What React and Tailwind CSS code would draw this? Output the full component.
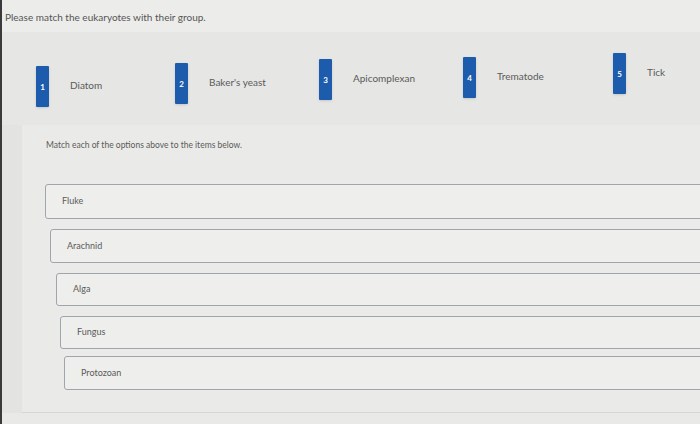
import React from 'react';

const options = [
  { n: 1, label: 'Diatom', w: 'w-[139px]', mt: 'mt-[34px]' },
  { n: 2, label: "Baker's yeast", w: 'w-[144px]', mt: 'mt-[31px]' },
  { n: 3, label: 'Apicomplexan', w: 'w-[144px]', mt: 'mt-[27px]' },
  { n: 4, label: 'Trematode', w: 'w-[150px]', mt: 'mt-[25px]' },
  { n: 5, label: 'Tick', w: 'w-[80px]', mt: 'mt-[21px]' },
];

const items = [
  { label: 'Fluke', cls: 'mt-[0px] ml-[23px] h-[35px]' },
  { label: 'Arachnid', cls: 'mt-[10px] ml-[28px] h-[34px]' },
  { label: 'Alga', cls: 'mt-[10px] ml-[34px] h-[33px]' },
  { label: 'Fungus', cls: 'mt-[10px] ml-[38px] h-[33px]' },
  { label: 'Protozoan', cls: 'mt-[7px] ml-[42px] h-[34px]' },
];

function Option({ option }) {
  return (
    <div className={`flex items-start shrink-0 whitespace-nowrap ${option.w} ${option.mt}`}>
      <div className="shrink-0 w-[13px] h-[41px] bg-[#1d5cad] rounded-[1px] flex items-center justify-center text-white text-[8px] font-bold shadow-sm">
        {option.n}
      </div>
      <div className="ml-[20px] pt-[13px] pl-[1px] text-[10px] text-[#5a5a5a] leading-[12px]">
        {option.label}
      </div>
    </div>
  );
}

export default function App() {
  return (
    <div className="w-[700px] h-[424px] overflow-hidden bg-[#e3e3e1] border-l-2 border-[#3a3a3a] font-['Lato',sans-serif] flex flex-col">
      <div className="h-[32px] shrink-0 bg-[#ececea] pl-[3px] pt-[12px] text-[10px] text-[#555] leading-none">
        Please match the eukaryotes with their group.
      </div>

      <div className="flex h-[93px] shrink-0 pl-[34px] bg-[#e6e6e4]">
        {options.map((o) => (
          <Option key={o.n} option={o} />
        ))}
      </div>

      <div className="ml-[20px] -mr-[20px] h-[288px] shrink-0 bg-[#eaeae8] border-b border-[#d6d6d4] pt-[16px]">
        <div className="ml-[24px] text-[8.5px] text-[#5a5a5a] leading-none">
          Match each of the options above to the items below.
        </div>

        <div className="flex flex-col mt-[34px]">
          {items.map((it) => (
            <div
              key={it.label}
              className={`${it.cls} border-[1.5px] border-[#a0a5ac] rounded-[3px] bg-[#eeeeec] flex items-center pl-[16px] text-[9px] text-[#5a5a5a]`}
            >
              {it.label}
            </div>
          ))}
        </div>
      </div>

      <div className="flex-1 bg-[#e9e9e7]" />
    </div>
  );
}
